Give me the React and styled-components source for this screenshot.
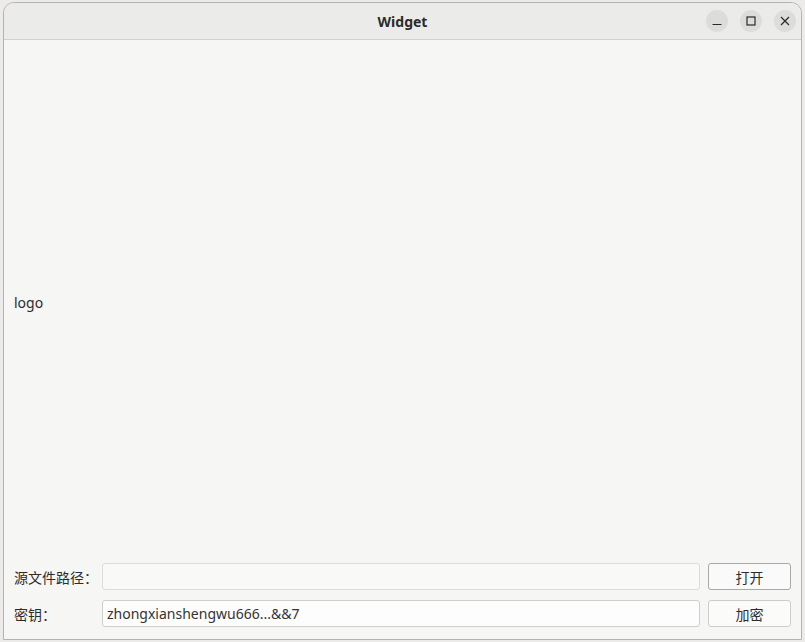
import React from 'react';
import styled, { createGlobalStyle } from 'styled-components';

const GlobalStyle = createGlobalStyle`
  html, body {
    margin: 0;
    padding: 0;
    width: 805px;
    height: 642px;
    overflow: hidden;
    background: #e9e9e7;
  }
  #root {
    width: 805px;
    height: 642px;
  }
`;

const Desktop = styled.div`
  width: 805px;
  height: 642px;
  box-sizing: border-box;
  padding: 2px 3px 2px 3px;
  background: #ecebe9;
`;

const Window = styled.div`
  width: 799px;
  height: 638px;
  box-sizing: border-box;
  display: flex;
  flex-direction: column;
  border: 1px solid #b3b3b1;
  border-radius: 11px 11px 0 0;
  overflow: hidden;
  background: #f6f6f5;
  font-family: "Noto Sans", "Noto Sans CJK SC", sans-serif;
  color: #2e2e2e;
`;

const TitleBar = styled.div`
  height: 36px;
  flex: none;
  display: flex;
  align-items: center;
  justify-content: center;
  background: #ebebea;
  border-bottom: 1px solid #d0d0ce;
  position: relative;
`;

const Title = styled.div`
  font-family: "Noto Sans", sans-serif;
  font-weight: 700;
  font-size: 14px;
  color: #2b2b2b;
`;

const Controls = styled.div`
  position: absolute;
  right: 5px;
  top: 7px;
  display: flex;
  gap: 12px;
`;

const CircleButton = styled.div`
  width: 22px;
  height: 22px;
  border-radius: 50%;
  background: #dcdcdb;
  display: flex;
  align-items: center;
  justify-content: center;
  color: #2a2a2a;
`;

const Content = styled.div`
  flex: 1;
  display: flex;
  flex-direction: column;
  padding: 11px 10px 12px 10px;
  gap: 10px;
`;

const LogoLabel = styled.div`
  flex: 1;
  display: flex;
  align-items: center;
  font-size: 14px;
  color: #2c2c2c;
  padding-top: 1px;
`;

const Form = styled.div`
  display: grid;
  grid-template-columns: 80px 1fr 83px;
  grid-auto-rows: 27px;
  column-gap: 8px;
  row-gap: 10px;
`;

const FieldLabel = styled.div`
  display: flex;
  align-items: center;
  font-size: 14px;
  color: #2c2c2c;
  white-space: nowrap;
`;

const LineEdit = styled.div`
  box-sizing: border-box;
  border: 1px solid ${(p) => (p.$empty ? '#dcdcda' : '#cfcfcd')};
  border-radius: 3px;
  background: ${(p) => (p.$empty ? '#f9f9f8' : '#fdfdfd')};
  display: flex;
  align-items: center;
  padding: 0 4px;
  font-size: 14px;
  color: #333333;
  white-space: nowrap;
  overflow: hidden;
`;

const PushButton = styled.div`
  box-sizing: border-box;
  border: 1px solid ${(p) => (p.$default ? '#a9a9a7' : '#cdcdcb')};
  border-radius: 3px;
  background: ${(p) => (p.$default ? '#fafafa' : '#fbfbfa')};
  display: flex;
  align-items: center;
  justify-content: center;
  font-size: 14px;
  color: #2c2c2c;
`;

const Icon = ({ kind }) => (
  <svg width="10" height="10" viewBox="0 0 10 10" fill="none" stroke="currentColor" strokeWidth="1.2">
    {kind === 'min' && <path d="M0.5 8.5h9" />}
    {kind === 'max' && <rect x="1" y="1" width="8" height="8" />}
    {kind === 'close' && <path d="M1 1l8 8M9 1l-8 8" />}
  </svg>
);

const App = () => {
  return (
    <>
      <GlobalStyle />
      <Desktop>
        <Window>
          <TitleBar>
            <Title>Widget</Title>
            <Controls>
              <CircleButton><Icon kind="min" /></CircleButton>
              <CircleButton><Icon kind="max" /></CircleButton>
              <CircleButton><Icon kind="close" /></CircleButton>
            </Controls>
          </TitleBar>
          <Content>
            <LogoLabel>logo</LogoLabel>
            <Form>
              <FieldLabel>源文件路径：</FieldLabel>
              <LineEdit $empty />
              <PushButton $default>打开</PushButton>
              <FieldLabel>密钥：</FieldLabel>
              <LineEdit>zhongxianshengwu666...&amp;&amp;7</LineEdit>
              <PushButton>加密</PushButton>
            </Form>
          </Content>
        </Window>
      </Desktop>
    </>
  );
};

export default App;
